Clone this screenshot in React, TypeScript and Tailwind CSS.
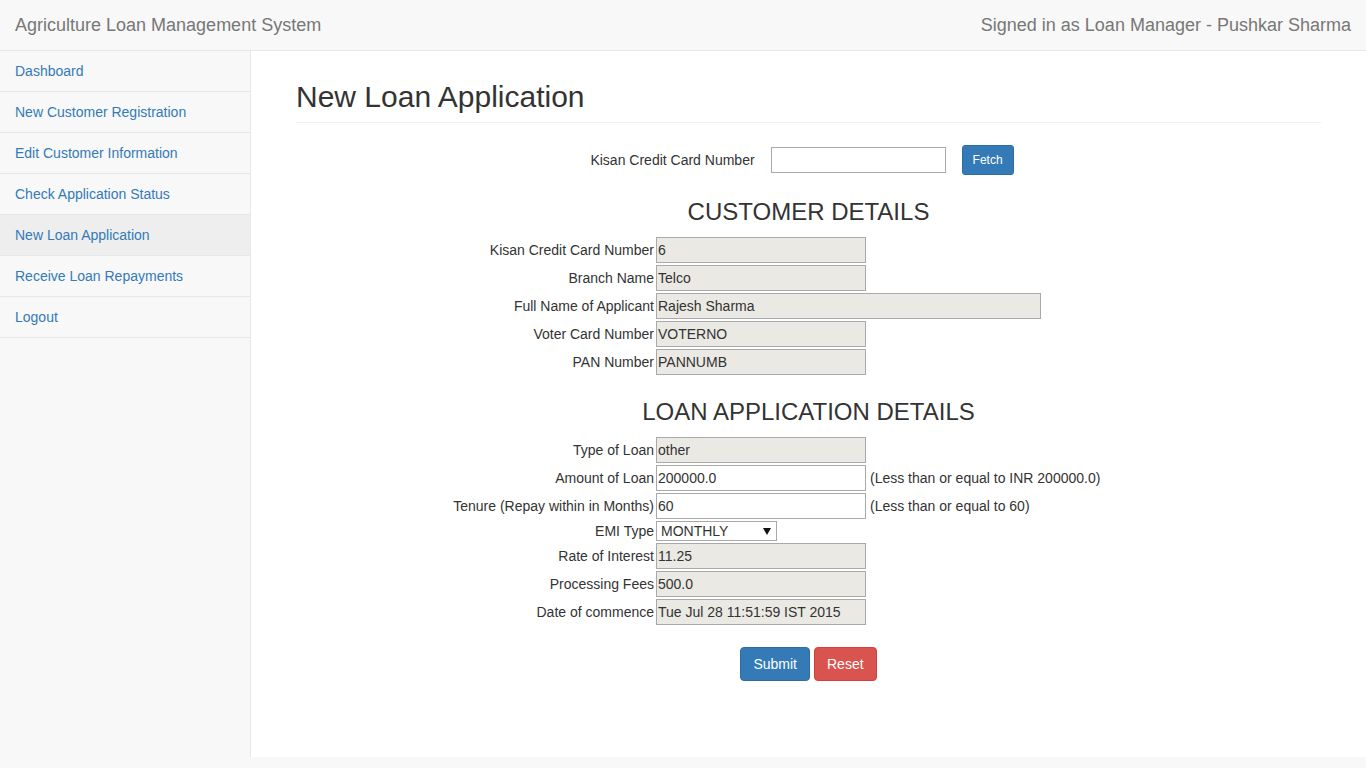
import React from "react";

const font = { fontFamily: '"Liberation Sans", Arial, sans-serif' };

const navItems = [
  "Dashboard",
  "New Customer Registration",
  "Edit Customer Information",
  "Check Application Status",
  "New Loan Application",
  "Receive Loan Repayments",
  "Logout",
];

function Field({
  label,
  value,
  disabled = true,
  wide = false,
  hint,
}: {
  label: string;
  value: string;
  disabled?: boolean;
  wide?: boolean;
  hint?: string;
}) {
  return (
    <div className="flex h-[26px] items-center">
      <label className="w-[358px] shrink-0 text-right text-[14px] leading-[20px] text-[#333]">{label}</label>
      <input
        readOnly
        value={value}
        className={`ml-[2px] h-[26px] ${wide ? "w-[385px]" : "w-[210px]"} border border-[#a9a9a9] ${
          disabled ? "bg-[#ebe9e3]" : "bg-white"
        } px-[1px] text-[14px] text-[#333] outline-none`}
        style={font}
      />
      {hint && <span className="ml-[4px] text-[14px] leading-[20px] text-[#333]">{hint}</span>}
    </div>
  );
}

export default function App() {
  return (
    <div className="min-h-screen bg-[#f8f8f8]" style={font}>
      <header className="flex h-[51px] items-center justify-between border-b border-[#e7e7e7] bg-[#f8f8f8] px-[15px] text-[18px] text-[#777]">
        <span>Agriculture Loan Management System</span>
        <span>Signed in as Loan Manager - Pushkar Sharma</span>
      </header>
      <div className="flex h-[706px]">
        <nav className="w-[251px] shrink-0 border-r border-[#e7e7e7] bg-[#f8f8f8]">
          {navItems.map((item) => (
            <div
              key={item}
              className={`border-b border-[#e7e7e7] px-[15px] py-[10px] text-[14px] leading-[20px] text-[#337ab7] ${
                item === "New Loan Application" ? "bg-[#eeeeee]" : ""
              }`}
            >
              {item}
            </div>
          ))}
        </nav>
        <main className="flex-1 bg-white px-[45px] pt-[29px]">
          <div className="border-b border-[#eeeeee] pb-[9px]">
            <h1 className="text-[30px] leading-[33px] text-[#333]">New Loan Application</h1>
          </div>

          <div className="mt-[22px] flex h-[30px] items-center justify-center pr-[13px]">
            <span className="text-[14px] text-[#333]">Kisan Credit Card Number</span>
            <input
              className="ml-[16px] h-[26px] w-[175px] border border-[#a9a9a9] bg-white px-[2px] text-[14px] outline-none"
              style={font}
            />
            <button className="ml-[16px] h-[30px] rounded-[3px] border border-[#2e6da4] bg-[#337ab7] px-[10px] text-[12px] text-white">
              Fetch
            </button>
          </div>

          <h3 className="mt-[24px] text-center text-[24px] leading-[26px] text-[#333]">CUSTOMER DETAILS</h3>
          <div className="mt-[12px] flex flex-col gap-[2px]">
            <Field label="Kisan Credit Card Number" value="6" />
            <Field label="Branch Name" value="Telco" />
            <Field label="Full Name of Applicant" value="Rajesh Sharma" wide />
            <Field label="Voter Card Number" value="VOTERNO" />
            <Field label="PAN Number" value="PANNUMB" />
          </div>

          <h3 className="mt-[24px] text-center text-[24px] leading-[26px] text-[#333]">LOAN APPLICATION DETAILS</h3>
          <div className="mt-[12px] flex flex-col gap-[2px]">
            <Field label="Type of Loan" value="other" />
            <Field
              label="Amount of Loan"
              value="200000.0"
              disabled={false}
              hint="(Less than or equal to INR 200000.0)"
            />
            <Field
              label="Tenure (Repay within in Months)"
              value="60"
              disabled={false}
              hint="(Less than or equal to 60)"
            />
            <div className="flex h-[20px] items-center">
              <label className="w-[358px] shrink-0 text-right text-[14px] leading-[20px] text-[#333]">EMI Type</label>
              <div className="relative ml-[2px] flex h-[20px] w-[121px] items-center border border-[#a9a9a9] bg-white">
                <select
                  className="h-[18px] w-full appearance-none bg-transparent py-0 pl-[4px] text-[14px] leading-[16px] text-[#333] outline-none"
                  style={font}
                  defaultValue="MONTHLY"
                >
                  <option>MONTHLY</option>
                  <option>QUARTERLY</option>
                  <option>YEARLY</option>
                </select>
                <svg
                  className="pointer-events-none absolute right-[5px] top-[6px]"
                  width="8"
                  height="7"
                  viewBox="0 0 8 7"
                >
                  <path d="M0 0 L8 0 L4 7 Z" fill="#111" />
                </svg>
              </div>
            </div>
            <Field label="Rate of Interest" value="11.25" />
            <Field label="Processing Fees" value="500.0" />
            <Field label="Date of commence" value="Tue Jul 28 11:51:59 IST 2015" />
          </div>

          <div className="mt-[22px] flex justify-center gap-[4px]">
            <button className="h-[34px] rounded-[4px] border border-[#2e6da4] bg-[#337ab7] px-[12px] text-[14px] text-white">
              Submit
            </button>
            <button className="h-[34px] rounded-[4px] border border-[#d43f3a] bg-[#d9534f] px-[12px] text-[14px] text-white">
              Reset
            </button>
          </div>
        </main>
      </div>
    </div>
  );
}
